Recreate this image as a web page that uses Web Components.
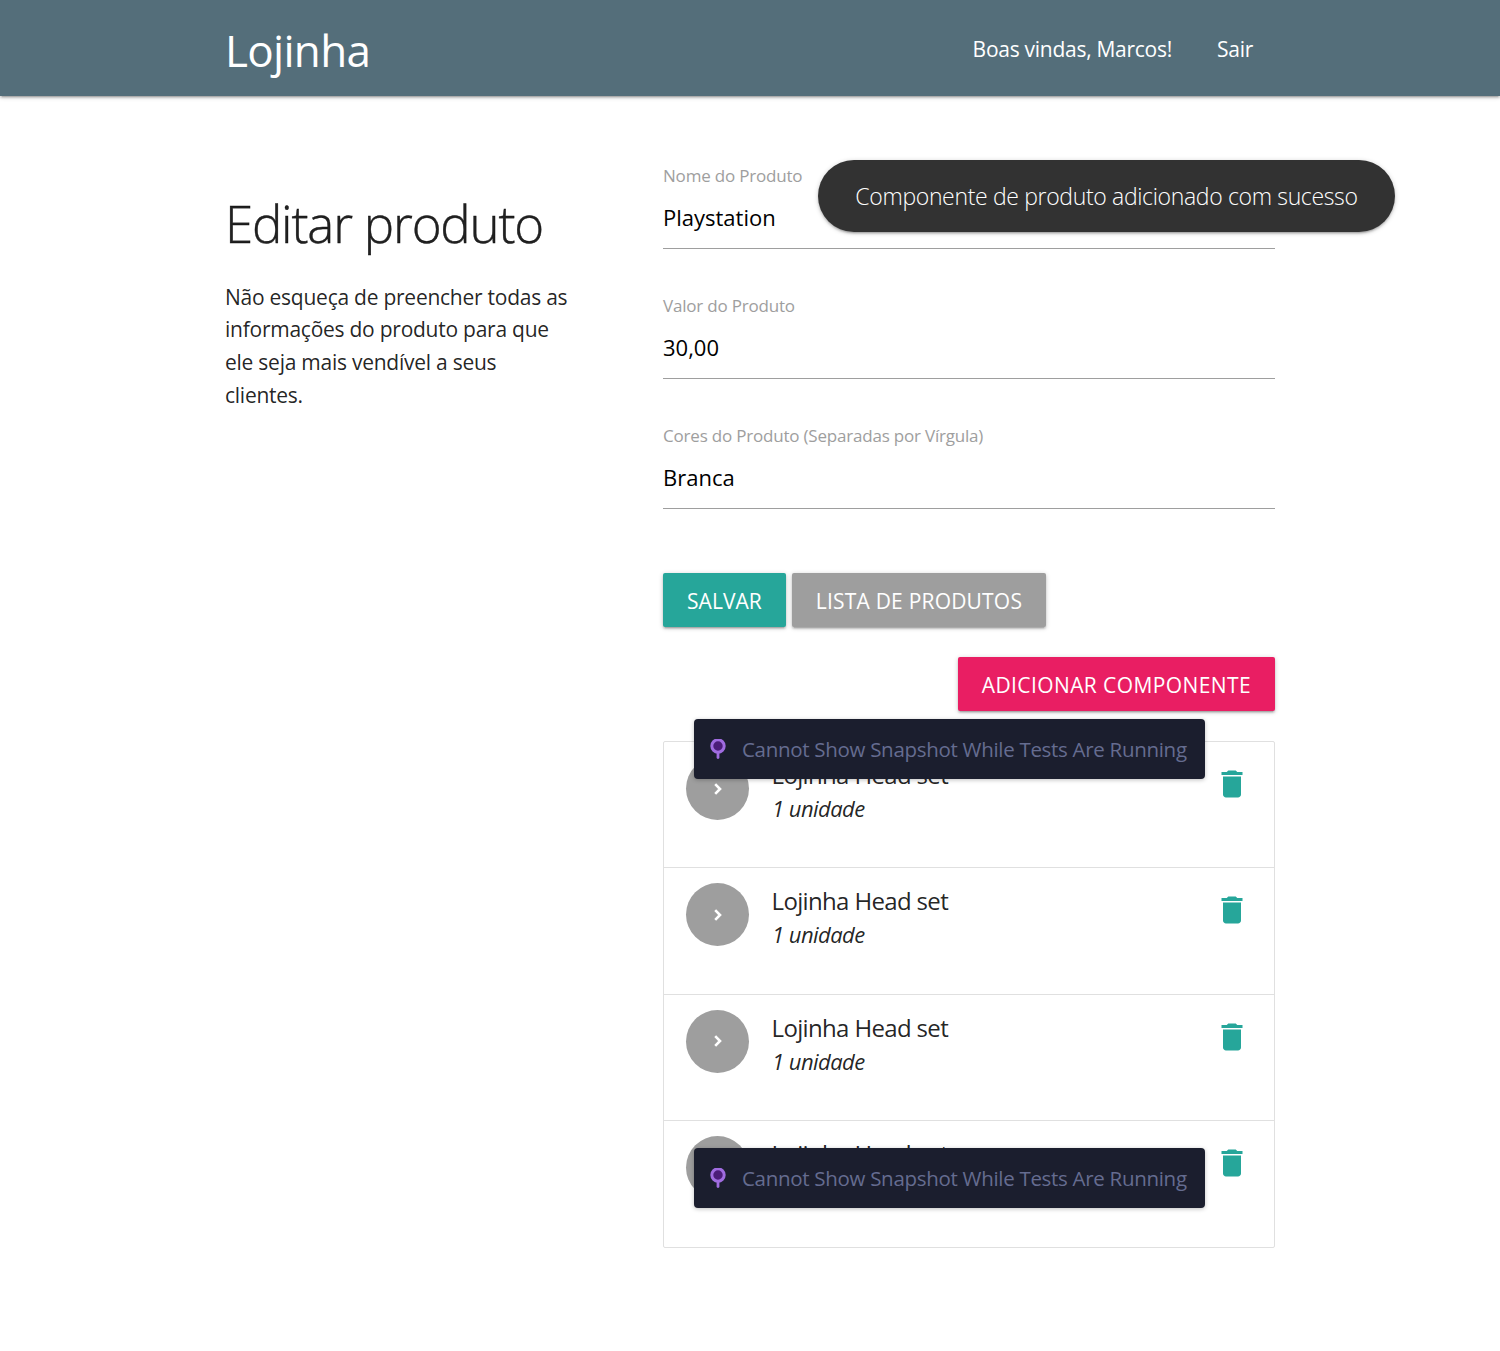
<!DOCTYPE html>
<html lang="pt-BR">
<head>
<meta charset="utf-8">
<title>Lojinha</title>
<style>
  html, body { margin: 0; background: #fff; }
  body { font-family: "Open Sans", "Noto Sans", sans-serif; color: rgba(0,0,0,0.87); }
</style>
</head>
<body>
<product-page></product-page>

<script>
const font = `"Open Sans", "Noto Sans", sans-serif`;

class AppHeader extends HTMLElement {
    constructor() {
        super();
        this.attachShadow({ mode: "open" });
        this.shadowRoot.innerHTML = `
<style>
  :host {
    display: flex;
    align-items: center;
    justify-content: space-between;
    height: 96px;
    padding: 0 247px 0 225px;
    background: #546e7a;
    color: #fff;
    font-family: ${font};
    box-shadow: 0 2px 2px 0 rgba(0,0,0,.14), 0 3px 1px -2px rgba(0,0,0,.12), 0 1px 5px 0 rgba(0,0,0,.2);
    position: relative;
  }
  .logo { font-size: 44px; padding-top: 3px; letter-spacing: -.7px; }
  nav { display: flex; gap: 45px; font-size: 21px; letter-spacing: -.27px; padding-top: 2px; }
</style>
<div class="logo">Lojinha</div>
<nav><span>Boas vindas, Marcos!</span><span>Sair</span></nav>`;
    }
}
customElements.define("app-header", AppHeader);

class FormField extends HTMLElement {
    constructor() {
        super();
        this.attachShadow({ mode: "open" });
        this.shadowRoot.innerHTML = `
<style>
  :host {
    display: block;
    height: 130px;
    font-family: ${font};
  }
  .label { font-size: 17px; line-height: 24px; color: #9e9e9e; letter-spacing: -.2px; }
  .value {
    margin-top: 5px;
    height: 48px;
    line-height: 48px;
    font-size: 22px;
    letter-spacing: 0;
    color: #000;
    border-bottom: 1px solid #9e9e9e;
    padding-bottom: 7px;
  }
</style>
<div class="label"></div>
<div class="value"></div>`;
    }
    connectedCallback() {
        this.shadowRoot.querySelector(".label").textContent = this.getAttribute("label");
        this.shadowRoot.querySelector(".value").textContent = this.getAttribute("value");
    }
}
customElements.define("form-field", FormField);

class AppButton extends HTMLElement {
    constructor() {
        super();
        this.attachShadow({ mode: "open" });
        this.shadowRoot.innerHTML = `
<style>
  :host {
    display: inline-block;
    height: 54px;
    line-height: 57px;
    padding: 0 24px;
    border-radius: 2px;
    background: var(--bg, #26a69a);
    color: #fff;
    font-family: ${font};
    font-size: 21px;
    letter-spacing: var(--ls, .1px);
    white-space: nowrap;
    box-shadow: 0 2px 2px 0 rgba(0,0,0,.14), 0 3px 1px -2px rgba(0,0,0,.12), 0 1px 5px 0 rgba(0,0,0,.2);
  }
</style>
<slot></slot>`;
    }
}
customElements.define("app-button", AppButton);

class ComponentItem extends HTMLElement {
    constructor() {
        super();
        this.attachShadow({ mode: "open" });
        this.shadowRoot.innerHTML = `
<style>
  :host {
    display: flex;
    align-items: flex-start;
    height: 126.4px;
    padding: 15px 22px 0;
    box-sizing: border-box;
    border-bottom: 1px solid #e0e0e0;
    font-family: ${font};
    color: rgba(0,0,0,.87);
  }
  :host(.last) { border-bottom: none; height: 126px; }
  .circle {
    flex: none;
    width: 63px;
    height: 63px;
    border-radius: 50%;
    background: #9e9e9e;
    display: flex;
    align-items: center;
    justify-content: center;
  }
  .circle svg { width: 24px; height: 24px; fill: none; stroke: #fff; stroke-width: 2.6; }
  .text { flex: 1; margin-left: 23px; }
  .title { font-size: 24px; line-height: 35px; letter-spacing: -.65px; margin-left: -.5px; }
  .qty { font-size: 22px; line-height: 33px; font-style: italic; letter-spacing: -.54px; }
  .trash { flex: none; width: 36px; height: 36px; margin: 9px 2px 0 0; fill: #26a69a; }
</style>
<div class="circle"><svg viewBox="0 0 24 24"><path d="M9.2 7.2 14 12l-4.8 4.8"/></svg></div>
<div class="text">
  <div class="title"><slot name="title"></slot></div>
  <div class="qty"><slot name="qty"></slot></div>
</div>
<svg class="trash" viewBox="0 0 24 24"><path d="M6 19c0 1.1.9 2 2 2h8c1.1 0 2-.9 2-2V7H6v12zM19 4h-3.5l-1-1h-5l-1 1H5v2h14V4z"/></svg>`;
    }
}
customElements.define("component-item", ComponentItem);

class SnapshotBanner extends HTMLElement {
    constructor() {
        super();
        this.attachShadow({ mode: "open" });
        this.shadowRoot.innerHTML = `
<style>
  :host {
    position: absolute;
    left: 30px;
    width: 511px;
    height: 60px;
    box-sizing: border-box;
    display: flex;
    align-items: center;
    gap: 16px;
    padding-left: 16px;
    background: #1b1e2e;
    border-radius: 4px;
    color: #656c90;
    font-family: ${font};
    font-size: 20.5px;
    letter-spacing: -.3px;
    white-space: nowrap;
    box-shadow: 0 1px 4px rgba(0,0,0,.25);
  }
  svg { flex: none; width: 16px; height: 20px; }
</style>
<svg viewBox="0 0 16 20"><circle cx="8" cy="7" r="6.2" fill="#4b1d78" stroke="#a06ce0" stroke-width="3"/><rect x="6.6" y="12" width="2.8" height="8" rx="1.4" fill="#a06ce0"/></svg>
<span>Cannot Show Snapshot While Tests Are Running</span>`;
    }
}
customElements.define("snapshot-banner", SnapshotBanner);

class ComponentList extends HTMLElement {
    constructor() {
        super();
        this.attachShadow({ mode: "open" });
        this.shadowRoot.innerHTML = `
<style>
  :host {
    display: block;
    position: relative;
    border: 1px solid #e0e0e0;
    border-radius: 2px;
  }
</style>
<slot></slot>`;
    }
}
customElements.define("component-list", ComponentList);

class ToastMessage extends HTMLElement {
    constructor() {
        super();
        this.attachShadow({ mode: "open" });
        this.shadowRoot.innerHTML = `
<style>
  :host {
    position: absolute;
    left: 818px;
    top: 160px;
    height: 72px;
    box-sizing: border-box;
    width: 577px;
    display: flex;
    align-items: center;
    justify-content: center;
    background: #323232;
    color: #fff;
    border-radius: 36px;
    font-family: ${font};
    font-size: 23px;
    font-weight: 300;
    letter-spacing: -.34px;
    white-space: nowrap;
    box-shadow: 0 2px 2px 0 rgba(0,0,0,.14), 0 3px 1px -2px rgba(0,0,0,.12), 0 1px 5px 0 rgba(0,0,0,.2);
  }
</style>
<slot></slot>`;
    }
}
customElements.define("toast-message", ToastMessage);

class ProductPage extends HTMLElement {
    constructor() {
        super();
        this.attachShadow({ mode: "open" });
        const item = (cls) => `<component-item class="${cls}"><span slot="title">Lojinha Head set</span><span slot="qty">1 unidade</span></component-item>`;
        this.shadowRoot.innerHTML = `
<style>
  :host { display: block; position: relative; min-height: 1351px; font-family: ${font}; }
  main {
    display: grid;
    grid-template-columns: 350px 612px;
    column-gap: 88px;
    padding: 68px 225px 0;
  }
  h1 {
    margin: 24px 0 0;
    font-size: 51px;
    line-height: 70px;
    font-weight: 300;
    letter-spacing: -1.2px;
    -webkit-text-stroke: .4px rgba(0,0,0,.87);
    color: rgba(0,0,0,.87);
  }
  .side p {
    margin: 22.5px 0 0;
    max-width: 346px;
    font-size: 21px;
    line-height: 32.8px;
    font-weight: 400;
    letter-spacing: -.25px;
    color: rgba(0,0,0,.87);
  }
  .actions { display: flex; gap: 6px; margin-top: 19px; }
  .add { display: flex; justify-content: flex-end; margin-top: 30px; }
  component-list { margin-top: 30px; }
</style>
<app-header></app-header>
<main>
  <section class="side">
    <h1>Editar produto</h1>
    <p>Não esqueça de preencher todas as informações do produto para que ele seja mais vendível a seus clientes.</p>
  </section>
  <section>
    <form-field label="Nome do Produto" value="Playstation"></form-field>
    <form-field label="Valor do Produto" value="30,00"></form-field>
    <form-field label="Cores do Produto (Separadas por Vírgula)" value="Branca"></form-field>
    <div class="actions">
      <app-button style="--ls:.05px">SALVAR</app-button>
      <app-button style="--bg:#9e9e9e;--ls:.2px">LISTA DE PRODUTOS</app-button>
    </div>
    <div class="add"><app-button style="--bg:#e91e63;--ls:.4px">ADICIONAR COMPONENTE</app-button></div>
    <component-list>
      ${item("")}${item("")}${item("")}${item("last")}
      <snapshot-banner style="top:-23px"></snapshot-banner>
      <snapshot-banner style="top:406px"></snapshot-banner>
    </component-list>
  </section>
</main>
<toast-message>Componente de produto adicionado com sucesso</toast-message>`;
    }
}
customElements.define("product-page", ProductPage);
</script>
</body>
</html>
